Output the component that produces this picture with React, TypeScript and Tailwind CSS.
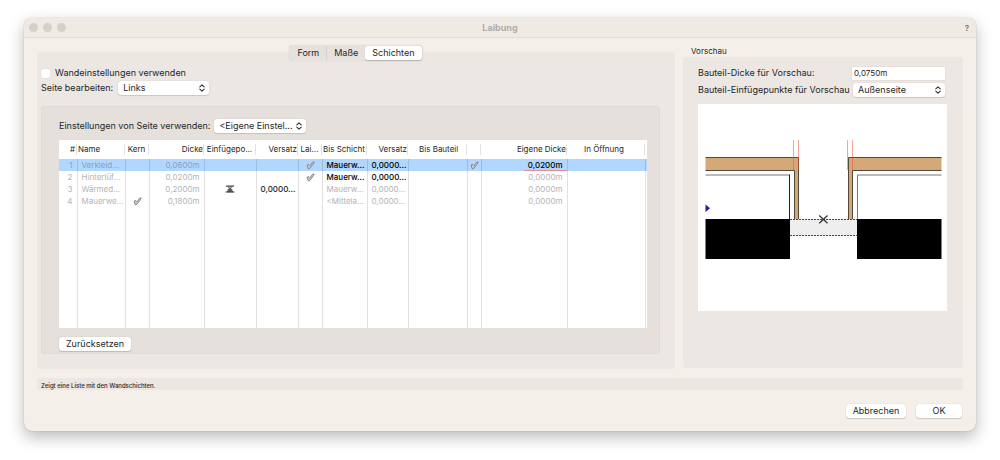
import { useState } from "react";
import type { ReactNode } from "react";

interface Layer {
  name: string;
  core: boolean;
  thickness: string;
  insertion: boolean;
  insertionOffset: string;
  reveal: boolean;
  toLayer: string;
  toLayerOffset: string;
  own: boolean;
  ownThickness: string;
  editable: boolean;
}

const layers: Layer[] = [
  {
    name: "Verkleid...",
    core: false,
    thickness: "0,0600m",
    insertion: false,
    insertionOffset: "",
    reveal: true,
    toLayer: "Mauerw...",
    toLayerOffset: "0,0000...",
    own: true,
    ownThickness: "0,0200m",
    editable: true,
  },
  {
    name: "Hinterlüf...",
    core: false,
    thickness: "0,0200m",
    insertion: false,
    insertionOffset: "",
    reveal: true,
    toLayer: "Mauerw...",
    toLayerOffset: "0,0000...",
    own: false,
    ownThickness: "0,0000m",
    editable: true,
  },
  {
    name: "Wärmed...",
    core: false,
    thickness: "0,2000m",
    insertion: true,
    insertionOffset: "0,0000...",
    reveal: false,
    toLayer: "Mauerw...",
    toLayerOffset: "0,0000...",
    own: false,
    ownThickness: "0,0000m",
    editable: false,
  },
  {
    name: "Mauerwe...",
    core: true,
    thickness: "0,1800m",
    insertion: false,
    insertionOffset: "",
    reveal: false,
    toLayer: "<Mittela...",
    toLayerOffset: "0,0000...",
    own: false,
    ownThickness: "0,0000m",
    editable: false,
  },
];

const columns = [
  { label: "#", width: "w-[18px]", align: "text-right pr-px" },
  { label: "Name", width: "w-[48px]", align: "text-left pl-px" },
  { label: "Kern", width: "w-[24px]", align: "text-center" },
  { label: "Dicke", width: "w-[55px]", align: "text-right" },
  { label: "Einfügepo...", width: "w-[52px]", align: "text-center" },
  { label: "Versatz", width: "w-[42px]", align: "text-right" },
  { label: "Lai...", width: "w-[24px]", align: "text-center" },
  { label: "Bis Schicht", width: "w-[45px]", align: "text-left pl-px" },
  { label: "Versatz", width: "w-[41px]", align: "text-right" },
  { label: "Bis Bauteil", width: "w-[59px]", align: "text-left pl-[11px]" },
  { label: "", width: "w-[14px]", align: "text-left" },
  { label: "Eigene Dicke", width: "w-[86px]", align: "text-right" },
  { label: "In Öffnung", width: "", align: "text-left pl-[17px]" },
];

const CheckMark = () => (
  <svg viewBox="0 0 10 10" className="mx-auto block size-[9px]">
    <path
      d="M1.2 4.6 L3.2 3.9 L4.5 5.2 L7.2 1.5 L9 1 L8.6 2.6 L4.6 7.8 L3 9 L2.2 8 Z"
      fill="#c9c9c9"
      stroke="#777"
      strokeWidth="0.9"
      strokeLinejoin="round"
    />
  </svg>
);

const InsertionIcon = () => (
  <svg viewBox="0 0 10 8" className="mx-auto block h-[8px] w-[10px]">
    <path d="M1 1.2 H9 M0.5 7 H9.5" stroke="#444" strokeWidth="1.2" />
    <path
      d="M2 6.8 L5 3.6 L8 6.8 Z"
      fill="#555"
      stroke="#444"
      strokeWidth="0.8"
    />
    <path d="M2.5 1.5 L7.5 5 M7.5 1.5 L2.5 5" stroke="#555" strokeWidth="0.9" />
  </svg>
);

const Arrows = () => (
  <svg
    viewBox="0 0 6 8"
    className="pointer-events-none absolute top-[3px] right-1 h-[8px] w-[6px]"
    fill="none"
    stroke="#333"
    strokeWidth="1.1"
    strokeLinecap="round"
    strokeLinejoin="round"
  >
    <path d="M0.8 2.9 L3 0.8 L5.2 2.9 M0.8 5.1 L3 7.2 L5.2 5.1" />
  </svg>
);

interface PopUpProps {
  id: string;
  className: string;
  options: string[];
}

const PopUp = ({ id, className, options }: PopUpProps) => (
  <div className={`relative h-[14px] ${className}`}>
    <select
      id={id}
      className="block h-full w-full appearance-none rounded-[3px] bg-white pl-[5px] text-[9px] leading-[14px] shadow-[0_0_1px_rgba(0,0,0,0.2),0_1px_1px_rgba(0,0,0,0.12)]"
    >
      {options.map((option) => (
        <option key={option}>{option}</option>
      ))}
    </select>
    <Arrows />
  </div>
);

const PushButton = ({
  className,
  children,
}: {
  className: string;
  children: ReactNode;
}) => (
  <button
    type="button"
    className={`h-[14px] rounded-[3px] bg-white text-center text-[9px] leading-[14px] shadow-[0_0_1px_rgba(0,0,0,0.25),0_1px_1px_rgba(0,0,0,0.15)] ${className}`}
  >
    {children}
  </button>
);

const LayerTable = () => {
  const [selected, setSelected] = useState(0);

  return (
    <table className="w-full table-fixed border-collapse bg-white text-[8px] leading-[12px] whitespace-nowrap">
      <thead>
        <tr className="h-[19px]">
          {columns.map((column, index) => (
            <th key={index} className={`p-0 font-normal ${column.width}`}>
              <div
                className={`h-[11px] border-r border-[#e2e2e2] leading-[11px] ${column.align}`}
              >
                {column.label}
              </div>
            </th>
          ))}
          <th className="w-[2px] p-0" />
        </tr>
      </thead>
      <tbody className="[&_td]:border-r [&_td]:border-black/12 [&_td]:p-0 [&_td:last-child]:border-r-0">
        {layers.map((layer, index) => (
          <tr
            key={layer.name}
            onClick={() => setSelected(index)}
            className={`h-[12px] ${
              selected === index
                ? "bg-[#b2d7ff] text-[#86a2c0]"
                : "text-[#b4b4b4]"
            }`}
          >
            <td>
              <div className="pr-1 text-right">{index + 1}</div>
            </td>
            <td>
              <div className="pl-1">{layer.name}</div>
            </td>
            <td>{layer.core && <CheckMark />}</td>
            <td>
              <div className="pr-1 text-right">{layer.thickness}</div>
            </td>
            <td>{layer.insertion && <InsertionIcon />}</td>
            <td>
              <div className="pl-1 font-medium text-[#222]">
                {layer.insertionOffset}
              </div>
            </td>
            <td>{layer.reveal && <CheckMark />}</td>
            <td>
              <div
                className={`pl-1 ${
                  layer.editable ? "font-medium text-black" : ""
                }`}
              >
                {layer.toLayer}
              </div>
            </td>
            <td>
              <div
                className={`pl-1 ${
                  layer.editable ? "font-medium text-black" : ""
                }`}
              >
                {layer.toLayerOffset}
              </div>
            </td>
            <td />
            <td>{layer.own && <CheckMark />}</td>
            <td>
              <div
                className={`ml-auto h-[12px] w-[43px] pr-1 text-right ${
                  layer.own
                    ? "border-b border-[#e88a9a] font-medium text-black"
                    : ""
                }`}
              >
                {layer.ownThickness}
              </div>
            </td>
            <td />
            <td />
          </tr>
        ))}
        <tr className="h-[121px]">
          {columns.map((_, index) => (
            <td key={index} />
          ))}
          <td />
        </tr>
      </tbody>
    </table>
  );
};

const Preview = () => (
  <svg viewBox="698 104 249 207" className="block w-full bg-white">
    <g fill="#d5a878" stroke="#54483c" strokeWidth="1">
      <path
        d="M705.5 157.5 H798.5 V219 H794.5 V170.5 H705.5 Z"
        stroke="none"
      />
      <path
        d="M941.5 157.5 H848.5 V219 H852.5 V170.5 H941.5 Z"
        stroke="none"
      />
      <path
        d="M705.5 157.5 H798.5 V219 M794.5 219 V170.5 H705.5"
        fill="none"
      />
      <path
        d="M941.5 157.5 H848.5 V219 M852.5 219 V170.5 H941.5"
        fill="none"
      />
    </g>
    <g fill="none" strokeWidth="1">
      <path d="M705.5 175 H789.5" stroke="#777" />
      <path d="M789.5 174.5 V219" stroke="#222" />
      <path d="M941.5 175 H857.5 V219" stroke="#777" />
      <path
        d="M793.5 140 V170 M798.5 140 V170 M847.5 140 V170 M852.5 140 V170"
        stroke="#f04a3a"
        strokeOpacity="0.5"
      />
    </g>
    <path d="M705.5 204.5 L710 208.3 L705.5 212 Z" fill="#1c1ca8" />
    <rect x="790" y="219" width="67" height="17" fill="#eeeeee" />
    <path
      d="M790 219.5 H857 M790 235.5 H857"
      stroke="#444"
      strokeWidth="1"
      strokeDasharray="2 1"
    />
    <rect x="705.5" y="219" width="84.5" height="40" />
    <rect x="857" y="219" width="84.5" height="40" />
    <path
      d="M819.3 215.5 L827.5 223.2 M827.5 215.5 L819.3 223.2"
      stroke="#333"
      strokeWidth="1.2"
    />
  </svg>
);

const tabs = ["Form", "Maße", "Schichten"];

const App = () => {
  const [activeTab, setActiveTab] = useState("Schichten");
  const [thickness, setThickness] = useState("0,0750m");
  const [useWallSettings, setUseWallSettings] = useState(false);

  return (
    <div className="min-h-screen bg-white px-6 pt-[18px] pb-[29px] font-['Inter',sans-serif] text-[9px] leading-[14px] text-[#262626]">
      <div className="rounded-[8px] bg-[#f4efe8] pb-[13px] shadow-[0_0_1px_rgba(0,0,0,0.4),0_6px_16px_rgba(0,0,0,0.28)]">
        <header className="flex h-5 items-center rounded-t-[8px] border-b border-[#e3ded8] bg-[#efeae4] px-[5px]">
          <div className="flex flex-1 gap-[5px]">
            <span className="size-[9px] rounded-full bg-[#d5d0ca]" />
            <span className="size-[9px] rounded-full bg-[#d5d0ca]" />
            <span className="size-[9px] rounded-full bg-[#d5d0ca]" />
          </div>
          <h1 className="font-bold text-[#b1aca7]">Laibung</h1>
          <div className="flex flex-1 justify-end">
            <button
              type="button"
              className="px-[2px] text-[8px] font-semibold text-[#77736f]"
            >
              ?
            </button>
          </div>
        </header>

        <main className="flex gap-2 px-[13px] pt-[7px]">
          <div className="flex min-w-0 flex-1 flex-col">
            <div className="relative flex h-4 self-center rounded-[4px] bg-[#e6e1dd] p-px shadow-[0_0_1px_rgba(0,0,0,0.2)]">
              {tabs.map((tab, index) => (
                <button
                  key={tab}
                  type="button"
                  onClick={() => setActiveTab(tab)}
                  className={`px-[7px] leading-[14px] ${
                    activeTab === tab
                      ? "rounded-[3px] bg-white shadow-[0_1px_1px_rgba(0,0,0,0.2)]"
                      : ""
                  } ${index === 0 ? "border-r border-[#d6d1cd]" : ""}`}
                >
                  {tab}
                </button>
              ))}
            </div>

            <section className="-mt-[9px] flex-1 rounded-[3px] bg-[#ece7e3] pt-[13px] pr-[15px] pb-[15px] pl-1">
              <label className="flex h-4 items-center gap-[5px]">
                <input
                  type="checkbox"
                  checked={useWallSettings}
                  onChange={(e) => setUseWallSettings(e.target.checked)}
                  className="size-[9px] appearance-none rounded-[2px] bg-white shadow-[0_0_1px_rgba(0,0,0,0.2)] checked:bg-[#3b82f6]"
                />
                Wandeinstellungen verwenden
              </label>
              <div className="flex h-[14px] items-center gap-[5px]">
                <label htmlFor="side">Seite bearbeiten:</label>
                <PopUp
                  id="side"
                  className="w-[91px]"
                  options={["Links", "Rechts"]}
                />
              </div>

              <div className="mt-[11px] rounded-[3px] border border-[#e0dbd7] bg-[#e5e0dc] pt-[11px] pr-3 pb-[2px] pl-[17px]">
                <div className="flex h-4 items-center gap-1">
                  <label htmlFor="source">
                    Einstellungen von Seite verwenden:
                  </label>
                  <PopUp
                    id="source"
                    className="w-[92px]"
                    options={["<Eigene Einstel..."]}
                  />
                </div>
                <div className="mt-[6px] mb-[9px]">
                  <LayerTable />
                </div>
                <PushButton className="block w-[72px]">Zurücksetzen</PushButton>
              </div>
            </section>
          </div>

          <div className="flex w-[280px] flex-col">
            <h2 className="pl-2 text-[8px] leading-[12px]">Vorschau</h2>
            <section className="mb-px flex-1 rounded-[3px] bg-[#ece7e3] pt-2 pr-4 pl-[15px]">
              <div className="flex h-4 items-center justify-between pr-[2px]">
                <label htmlFor="thickness">Bauteil-Dicke für Vorschau:</label>
                <input
                  id="thickness"
                  type="text"
                  value={thickness}
                  onChange={(e) => setThickness(e.target.value)}
                  className="h-[13px] w-[93px] bg-white pl-[2px] text-[8px] shadow-[0_0_1px_rgba(0,0,0,0.2)]"
                />
              </div>
              <div className="mt-px flex h-4 items-center justify-between pr-[2px] whitespace-nowrap">
                <label htmlFor="insertion">
                  Bauteil-Einfügepunkte für Vorschau
                </label>
                <PopUp
                  id="insertion"
                  className="w-[92px]"
                  options={["Außenseite", "Innenseite"]}
                />
              </div>
              <div className="mt-[6px]">
                <Preview />
              </div>
            </section>
          </div>
        </main>

        <p className="mx-[13px] mt-[9px] h-3 rounded-[3px] bg-[#ece7e3] px-1 pt-px text-[6px] leading-[14px] font-medium">
          Zeigt eine Liste mit den Wandschichten.
        </p>

        <footer className="mt-[14px] flex justify-end gap-[10px] px-[14px]">
          <PushButton className="w-[60px]">Abbrechen</PushButton>
          <PushButton className="w-[46px]">OK</PushButton>
        </footer>
      </div>
    </div>
  );
};

export default App;
